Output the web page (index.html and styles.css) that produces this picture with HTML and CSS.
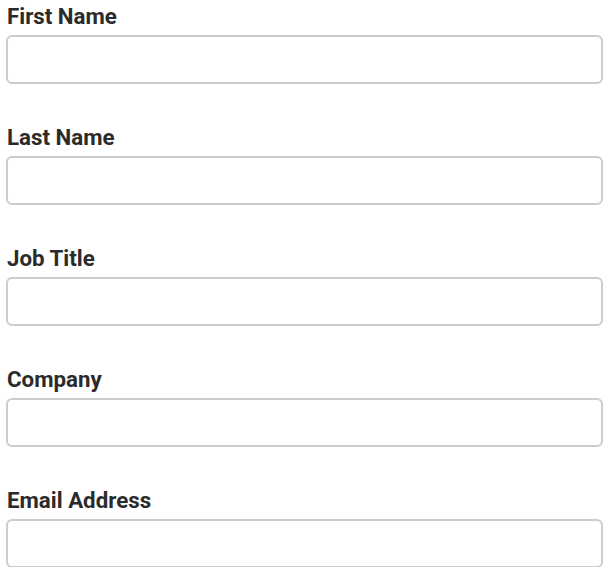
FILE: index.html
```html
<!DOCTYPE html>
<html lang="en">
<head>
<meta charset="utf-8">
<title>Form</title>
<link rel="stylesheet" href="styles.css">
</head>
<body>
<form class="form">
  <div class="field">
    <label class="label" for="first">First Name</label>
    <input class="input" id="first" type="text">
  </div>
  <div class="field">
    <label class="label" for="last">Last Name</label>
    <input class="input" id="last" type="text">
  </div>
  <div class="field">
    <label class="label" for="job">Job Title</label>
    <input class="input" id="job" type="text">
  </div>
  <div class="field">
    <label class="label" for="company">Company</label>
    <input class="input" id="company" type="text">
  </div>
  <div class="field">
    <label class="label" for="email">Email Address</label>
    <input class="input" id="email" type="email">
  </div>
</form>
</body>
</html>
```
FILE: styles.css
```css
html, body {
  margin: 0;
  padding: 0;
  background: #ffffff;
}
body {
  font-family: Roboto, "Liberation Sans", Arial, sans-serif;
  color: #2b2b2b;
}
.form {
  display: flex;
  flex-direction: column;
  gap: 40px;
  padding: 3px 0 0 6px;
}
.field {
  display: flex;
  flex-direction: column;
  gap: 6px;
}
.label {
  font-size: 22.3px;
  font-weight: 700;
  line-height: 26px;
  padding-left: 1px;
}
.input {
  box-sizing: border-box;
  width: 100%;
  height: 49px;
  margin: 0;
  border: 2px solid #cccccc;
  border-radius: 6px;
  background: #ffffff;
  font: inherit;
  outline: none;
}
```
